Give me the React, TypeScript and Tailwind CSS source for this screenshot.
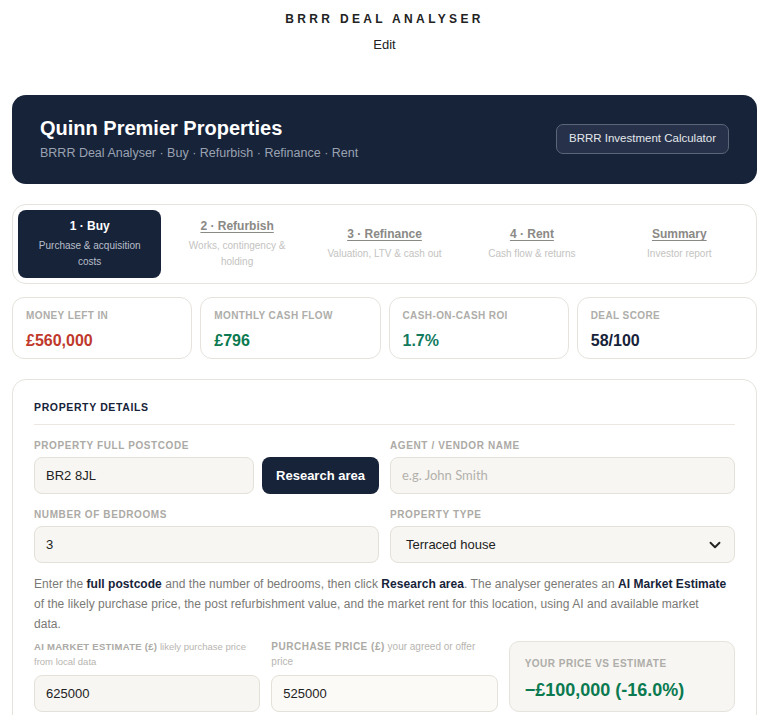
import { ChevronDown } from 'lucide-react';

const steps = [
  { title: '1 · Buy', sub: 'Purchase & acquisition costs' },
  { title: '2 · Refurbish', sub: 'Works, contingency & holding' },
  { title: '3 · Refinance', sub: 'Valuation, LTV & cash out' },
  { title: '4 · Rent', sub: 'Cash flow & returns' },
  { title: 'Summary', sub: 'Investor report' },
];

const metrics = [
  { label: 'Money left in', value: '£560,000', color: 'text-[#c0392b]' },
  { label: 'Monthly cash flow', value: '£796', color: 'text-[#0b7a50]' },
  { label: 'Cash-on-cash ROI', value: '1.7%', color: 'text-[#137a5e]' },
  { label: 'Deal score', value: '58/100', color: 'text-[#172339]' },
];

function Label({ children }: { children: React.ReactNode }) {
  return (
    <div className="text-[10px] font-bold uppercase tracking-[0.06em] text-[#acaaa5] mb-[4px] leading-[14px]">
      {children}
    </div>
  );
}

const inputCls =
  'h-[37px] rounded-[8px] border border-[#e4e1d8] bg-[#f7f6f2] px-[11px] flex items-center text-[13px] text-[#222]';

export default function App() {
  return (
    <div className="min-h-screen bg-white font-['Liberation_Sans',sans-serif] text-[#222]">
      <div className="text-center pt-[10px]">
        <div className="text-[12px] font-bold tracking-[0.28em] text-[#222]">BRRR DEAL ANALYSER</div>
        <div className="text-[13px] mt-[7px] text-[#222]">Edit</div>
      </div>

      <div className="px-[12px] mt-[40px]">
        {/* header banner */}
        <div className="bg-[#172339] rounded-[14px] h-[89px] px-[28px] flex items-center justify-between">
          <div>
            <div className="text-white text-[20px] font-bold leading-[26px]">Quinn Premier Properties</div>
            <div className="text-[#9aa2b1] text-[12.5px] mt-[3px]">
              BRRR Deal Analyser · Buy · Refurbish · Refinance · Rent
            </div>
          </div>
          <div className="rounded-[7px] border border-[#5b6578] bg-[#27324a] px-[12px] h-[30px] flex items-center text-[11.5px] text-[#e4e7ec]">
            BRRR Investment Calculator
          </div>
        </div>

        {/* step tabs */}
        <div className="mt-[20px] rounded-[14px] border border-[#e6e3dc] p-[5px] grid grid-cols-5 gap-[4px]">
          {steps.map((s, i) =>
            i === 0 ? (
              <div key={i} className="bg-[#172339] rounded-[8px] h-[68px] flex flex-col items-center justify-center text-center px-[10px]">
                <div className="text-white text-[12px] font-bold">{s.title}</div>
                <div className="text-[#b9bfca] text-[10px] leading-[16px] mt-[3px]">{s.sub}</div>
              </div>
            ) : (
              <div key={i} className="h-[68px] flex flex-col items-center justify-center text-center px-[12px]">
                <div className="text-[#8a8985] text-[12px] font-bold underline underline-offset-2">{s.title}</div>
                <div className="text-[#c4c3bf] text-[10px] leading-[16px] mt-[3px]">{s.sub}</div>
              </div>
            )
          )}
        </div>

        {/* headline metrics */}
        <div className="mt-[13px] grid grid-cols-4 gap-[8px]">
          {metrics.map((m) => (
            <div key={m.label} className="rounded-[12px] border border-[#e6e3dc] h-[62px] px-[13px] pt-[10px]">
              <div className="text-[10px] font-bold uppercase tracking-[0.04em] text-[#aeada9]">{m.label}</div>
              <div className={`text-[16px] font-bold mt-[6px] ${m.color}`}>{m.value}</div>
            </div>
          ))}
        </div>

        {/* property details */}
        <div className="mt-[20px] rounded-[14px] border border-[#e6e3dc] px-[21px] pt-[20px] pb-[20px]">
          <div className="text-[10.5px] font-bold uppercase tracking-[0.06em] text-[#172339] pb-[9px] border-b border-[#ebe8e1]">
            Property details
          </div>

          <div className="grid grid-cols-2 gap-x-[11px] mt-[14px]">
            <div>
              <Label>Property full postcode</Label>
              <div className="flex gap-[8px]">
                <div className={`${inputCls} flex-1`}>BR2 8JL</div>
                <div className="h-[37px] w-[117px] rounded-[8px] bg-[#172339] text-white text-[13px] font-bold flex items-center justify-center">
                  Research area
                </div>
              </div>
            </div>
            <div>
              <Label>Agent / Vendor name</Label>
              <div className={`${inputCls} font-['Lato',sans-serif] text-[#b3b1ac]`}>e.g. John Smith</div>
            </div>
          </div>

          <div className="grid grid-cols-2 gap-x-[11px] mt-[14px]">
            <div>
              <Label>Number of bedrooms</Label>
              <div className={inputCls}>3</div>
            </div>
            <div>
              <Label>Property type</Label>
              <div className={`${inputCls} justify-between pl-[15px] pr-[10px]`}>
                <span className="text-[13px]">Terraced house</span>
                <ChevronDown size={18} strokeWidth={2.5} className="text-[#222]" />
              </div>
            </div>
          </div>

          <p className="mt-[11px] text-[12px] tracking-[0.05px] leading-[20px] text-[#7a7975]">
            Enter the <b className="text-[#172339]">full postcode</b> and the number of bedrooms, then click{' '}
            <b className="text-[#172339]">Research area</b>. The analyser generates an{' '}
            <b className="text-[#172339]">AI Market Estimate</b>
            <br />
            of the likely purchase price, the post refurbishment value, and the market rent for this location, using AI and
            available market
            <br />
            data.
          </p>

          <div className="grid grid-cols-3 gap-x-[11px] mt-[5px] items-end">
            <div>
              <div className="text-[9.5px] leading-[15px] text-[#b7b5b0] mb-[6px]">
                <span className="font-bold uppercase tracking-[0.03em] text-[#acaaa5]">AI Market estimate (£)</span>{' '}
                likely purchase price from local data
              </div>
              <div className={`${inputCls} bg-[#efede7]`}>625000</div>
            </div>
            <div>
              <div className="text-[10px] leading-[15px] text-[#b7b5b0] mb-[6px] pr-[12px]">
                <span className="font-bold uppercase tracking-[0.05em] text-[#acaaa5]">Purchase price (£)</span> your
                agreed or offer price
              </div>
              <div className={`${inputCls} bg-[#fbfaf7]`}>525000</div>
            </div>
            <div className="rounded-[10px] border border-[#e6e3dc] bg-[#f7f6f2] h-[71px] px-[15px] pt-[14px]">
              <div className="text-[10px] font-bold uppercase tracking-[0.05em] text-[#aeada9]">Your price vs estimate</div>
              <div className="text-[18px] font-bold text-[#0b7a50] mt-[6px]">−£100,000 (-16.0%)</div>
            </div>
          </div>
        </div>
      </div>
    </div>
  );
}
